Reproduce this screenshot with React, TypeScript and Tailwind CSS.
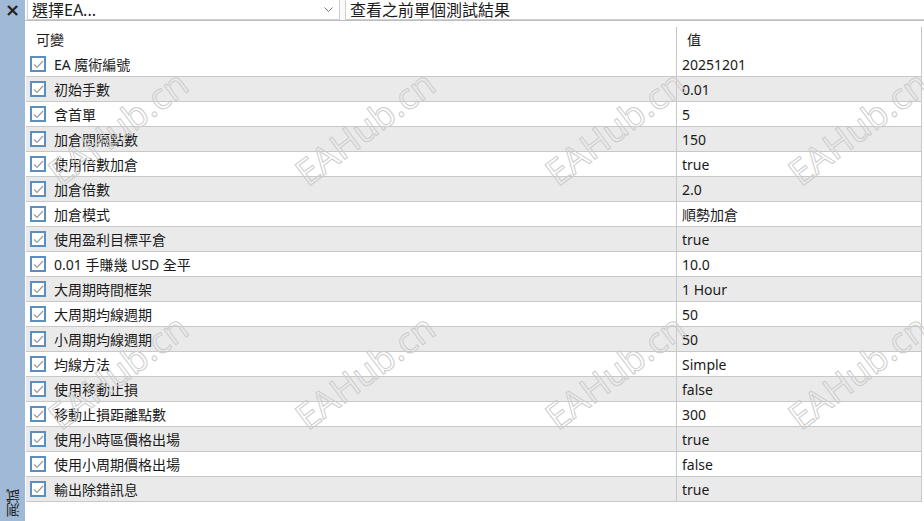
const rows: [string, string][] = [
  ["EA 魔術編號", "20251201"],
  ["初始手數", "0.01"],
  ["含首單", "5"],
  ["加倉間隔點數", "150"],
  ["使用倍數加倉", "true"],
  ["加倉倍數", "2.0"],
  ["加倉模式", "順勢加倉"],
  ["使用盈利目標平倉", "true"],
  ["0.01 手賺幾 USD 全平", "10.0"],
  ["大周期時間框架", "1 Hour"],
  ["大周期均線週期", "50"],
  ["小周期均線週期", "50"],
  ["均線方法", "Simple"],
  ["使用移動止損", "false"],
  ["移動止損距離點數", "300"],
  ["使用小時區價格出場", "true"],
  ["使用小周期價格出場", "false"],
  ["輸出除錯訊息", "true"],
]

// watermark centres
const marks = [
  [118, 128], [365, 128], [615, 128], [858, 128],
  [118, 372], [365, 372], [615, 372], [858, 372],
]

function Check() {
  return (
    <span className="w-[16px] h-[16px] border-2 border-[#5b8fc0] bg-white flex items-center justify-center shrink-0">
      <svg width="11" height="9" viewBox="0 0 11 9">
        <path d="M1 4.5 L4 7.5 L10 1" fill="none" stroke="#9a9a9a" strokeWidth="1.2" />
      </svg>
    </span>
  )
}

export default function App() {
  return (
    <div className="relative flex w-[924px] h-[521px] overflow-hidden bg-white text-[14px] text-[#1a1a1a]" style={{ fontFamily: '"Noto Sans", "Noto Sans CJK TC", sans-serif' }}>
      {/* side tab */}
      <div className="w-[25px] h-full bg-[#9fb9d7] flex flex-col items-center justify-between shrink-0">
        <span className="text-[18px] font-bold leading-none mt-[1px] text-[#222]" style={{ fontFamily: '"DejaVu Sans", sans-serif' }}>×</span>
        <span className="[writing-mode:vertical-rl] rotate-180 text-[14px] leading-none mb-[4px] text-[#222]" style={{ fontFamily: '"Noto Sans CJK TC", sans-serif' }}>測試</span>
      </div>

      <div className="flex-1 flex flex-col">
        {/* top bar */}
        <div className="h-[21px] flex items-stretch gap-[5px] pl-[2px] bg-[#fafafa] border-b border-[#bdbdbd]">
          <div className="w-[313px] flex items-center justify-between bg-white border border-t-0 border-[#cfcfcf] pl-[4px] pr-[6px]">
            <span className="text-[16px] leading-none">選擇EA...</span>
            <svg width="9" height="6" viewBox="0 0 9 6">
              <path d="M0.5 0.5 L4.5 4.5 L8.5 0.5" fill="none" stroke="#777" strokeWidth="1" />
            </svg>
          </div>
          <div className="flex-1 flex items-center bg-white border border-t-0 border-r-0 border-[#cfcfcf] pl-[4px]">
            <span className="text-[16px] leading-none">查看之前單個測試結果</span>
          </div>
        </div>

        {/* table */}
        <div className="mt-[6px] ml-[1px] w-[896px]">
          <div className="flex h-[25px]">
            <div className="w-[651px] flex items-center pl-[10px] border-r border-[#c4c4c4]">可變</div>
            <div className="flex-1 flex items-center pl-[10px] border-r border-[#c4c4c4]">值</div>
          </div>
          {rows.map(([k, v], i) => (
            <div key={k} className={`flex h-[25px] border-b border-[#c8c8c8] ${i % 2 ? "bg-[#eaeaea]" : "bg-white"}`}>
              <div className="w-[651px] flex items-center gap-[8px] pl-[4px] border-r border-[#c8c8c8]">
                <Check />
                <span>{k}</span>
              </div>
              <div className="flex-1 flex items-center pl-[5px] border-r border-[#c8c8c8]">{v}</div>
            </div>
          ))}
        </div>
      </div>

      {/* watermark */}
      {marks.map(([x, y], i) => (
        <span
          key={i}
          className="absolute pointer-events-none text-[36px] leading-none text-transparent whitespace-nowrap [-webkit-text-stroke:1px_#cdcdcd]"
          style={{ left: x, top: y, transform: "translate(-50%, -50%) rotate(-37deg)" }}
        >
          EAHub.cn
        </span>
      ))}
    </div>
  )
}
